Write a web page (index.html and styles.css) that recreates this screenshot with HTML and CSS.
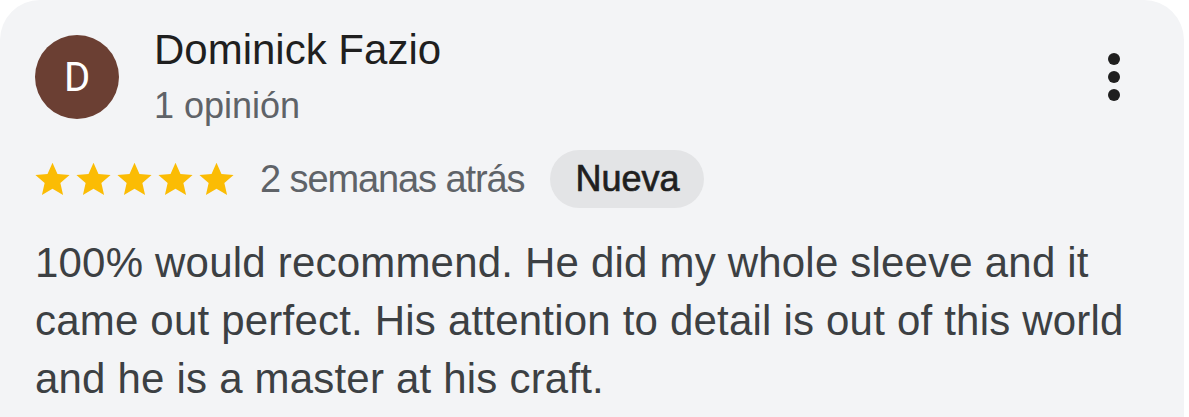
FILE: index.html
```html
<!DOCTYPE html>
<html lang="es">
<head>
<meta charset="utf-8">
<link rel="stylesheet" href="styles.css">
</head>
<body>
<div class="card">
  <div class="header">
    <div class="avatar">D</div>
    <div class="who">
      <div class="name">Dominick Fazio</div>
      <div class="count">1 opinión</div>
    </div>
    <div class="more"><span></span><span></span><span></span></div>
  </div>
  <div class="meta">
    <div class="stars">
      <svg viewBox="0 0 24 24"><path d="M12 2.5l2.9 6.6 7.1.6-5.4 4.7 1.6 7-6.2-3.7-6.2 3.7 1.6-7L2 9.7l7.1-.6z"/></svg>
      <svg viewBox="0 0 24 24"><path d="M12 2.5l2.9 6.6 7.1.6-5.4 4.7 1.6 7-6.2-3.7-6.2 3.7 1.6-7L2 9.7l7.1-.6z"/></svg>
      <svg viewBox="0 0 24 24"><path d="M12 2.5l2.9 6.6 7.1.6-5.4 4.7 1.6 7-6.2-3.7-6.2 3.7 1.6-7L2 9.7l7.1-.6z"/></svg>
      <svg viewBox="0 0 24 24"><path d="M12 2.5l2.9 6.6 7.1.6-5.4 4.7 1.6 7-6.2-3.7-6.2 3.7 1.6-7L2 9.7l7.1-.6z"/></svg>
      <svg viewBox="0 0 24 24"><path d="M12 2.5l2.9 6.6 7.1.6-5.4 4.7 1.6 7-6.2-3.7-6.2 3.7 1.6-7L2 9.7l7.1-.6z"/></svg>
    </div>
    <span class="when">2 semanas atrás</span>
    <span class="chip">Nueva</span>
  </div>
  <p class="text">100% would recommend. He did my whole sleeve and it came out perfect. His attention to detail is out of this world and he is a master at his craft.</p>
</div>
</body>
</html>
```
FILE: styles.css
```css
html, body {
  margin: 0;
  padding: 0;
  background: #ffffff;
}
body {
  font-family: "Liberation Sans", Arial, sans-serif;
  overflow: hidden;
}
.card {
  background: #f3f4f6;
  margin-right: 5px;
  border-radius: 40px 40px 0 0;
  padding: 26px 0 60px 35px;
  min-height: 500px;
  box-sizing: border-box;
}
.header {
  display: flex;
  align-items: flex-start;
}
.avatar {
  width: 84px;
  height: 84px;
  border-radius: 50%;
  background: #6b3f33;
  color: #fff;
  font-family: Roboto, sans-serif;
  font-size: 40px;
  display: flex;
  align-items: center;
  justify-content: center;
  margin-top: 9px;
  flex: none;
}
.who {
  margin-left: 35px;
  flex: 1;
}
.name {
  font-size: 42px;
  color: #1f1f1f;
  line-height: 48px;
}
.count {
  font-size: 36px;
  color: #5f6368;
  line-height: 44px;
  margin-top: 10px;
}
.more {
  display: flex;
  flex-direction: column;
  gap: 6px;
  margin: 27px 64px 0 0;
}
.more span {
  width: 12px;
  height: 12px;
  border-radius: 50%;
  background: #1f1f1f;
}
.meta {
  display: flex;
  align-items: center;
  margin-top: 22px;
}
.stars {
  display: flex;
  margin-left: -3px;
}
.stars svg {
  width: 41px;
  height: 42px;
  fill: #fbbc04;
}
.when {
  font-size: 38px;
  letter-spacing: -1.1px;
  color: #5f6368;
  margin-left: 23px;
}
.chip {
  margin-left: 26px;
  background: #e3e4e6;
  color: #1f1f1f;
  font-size: 36px;
  -webkit-text-stroke: 0.7px #1f1f1f;
  padding: 0 25px;
  height: 58px;
  line-height: 58px;
  border-radius: 29px;
}
.text {
  margin: 26px 40px 0 0;
  font-size: 42px;
  letter-spacing: 0.2px;
  line-height: 58px;
  color: #3c4043;
}
```
